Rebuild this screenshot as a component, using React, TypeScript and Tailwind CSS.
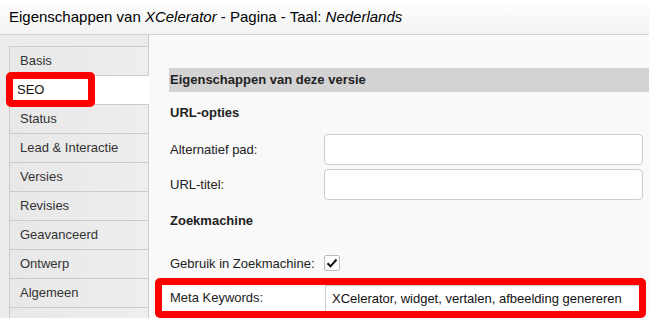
import React from "react";

const TABS = [
  "Basis",
  "SEO",
  "Status",
  "Lead & Interactie",
  "Versies",
  "Revisies",
  "Geavanceerd",
  "Ontwerp",
  "Algemeen",
  "",
];

function Tab({ label, active }: { label: string; active: boolean }) {
  if (active) {
    return (
      <div className="relative h-[29px] mr-[-1px] bg-white border-t border-l border-[#cccccc] flex items-center">
        {/* red highlight around selected tab */}
        <div className="absolute left-[-4px] top-[-4px] w-[89px] h-[35px] border-[7px] border-[#ff0000] rounded-[5px] bg-white flex items-center pl-[4px]">
          <span className="text-[13px] text-[#111]">{label}</span>
        </div>
      </div>
    );
  }
  return (
    <div className="h-[29px] border-t border-l border-[#cccccc] bg-gradient-to-r from-[#e8e8e8] to-[#eeeeee] flex items-center pl-[10px]">
      <span className="text-[13px] text-[#333]">{label}</span>
    </div>
  );
}

function FieldRow({ label, children }: { label: string; children: React.ReactNode }) {
  return (
    <div className="flex items-center">
      <div className="w-[155px] pl-[1px] text-[13px] text-[#222]">{label}</div>
      {children}
    </div>
  );
}

export default function App() {
  return (
    <div
      className="w-[649px] h-[318px] overflow-hidden bg-[#f9f9f9] flex flex-col"
      style={{ fontFamily: '"Liberation Sans", Arial, sans-serif' }}
    >
      {/* Title bar */}
      <div className="h-[35px] shrink-0 border-b border-[#d4d4d4] bg-gradient-to-b from-white to-[#f2f2f2] flex items-center pl-[9px] text-[15px] text-black">
        Eigenschappen van&nbsp;<i>XCelerator</i>&nbsp;- Pagina - Taal:&nbsp;<i>Nederlands</i>
      </div>

      <div className="flex flex-1 min-h-0">
        {/* Sidebar */}
        <div className="w-[149px] shrink-0 bg-[#ececec] border-r border-[#cccccc] pt-[11px] pl-[9px]">
          {TABS.map((t, i) => (
            <Tab key={i} label={t} active={t === "SEO"} />
          ))}
        </div>

        {/* Main */}
        <div className="flex-1 pl-[20px] pt-[33px] flex flex-col">
          <div className="h-[25px] bg-[#d3d3d3] flex items-center pl-[1px] text-[13px] font-bold text-[#222]">
            Eigenschappen van deze versie
          </div>

          <div className="h-[43px] flex items-center pl-[1px] text-[13px] font-bold text-[#222]">
            URL-opties
          </div>

          <div className="flex flex-col gap-[4px]">
            <FieldRow label="Alternatief pad:">
              <div className="w-[319px] h-[31px] bg-white border border-[#cccccc] rounded-[4px]" />
            </FieldRow>
            <FieldRow label="URL-titel:">
              <div className="w-[319px] h-[31px] bg-white border border-[#cccccc] rounded-[4px]" />
            </FieldRow>
          </div>

          <div className="h-[44px] flex items-center pl-[1px] text-[13px] font-bold text-[#222]">
            Zoekmachine
          </div>

          <div className="mt-[11px]">
            <FieldRow label="Gebruik in Zoekmachine:">
              <div className="w-[16px] h-[16px] bg-white border border-[#bbbbbb] rounded-[2px] flex items-center justify-center">
                <svg width="12" height="12" viewBox="0 0 12 12">
                  <path d="M1.5 6.2 L4.5 9.3 L10.5 2.5" fill="none" stroke="#111" strokeWidth="2" />
                </svg>
              </div>
            </FieldRow>
          </div>

          {/* Meta keywords, highlighted */}
          <div className="mt-[5px] ml-[-14px] w-[491px] h-[40px] shrink-0 border-[7px] border-[#ff0000] rounded-[5px] bg-white flex">
            <div className="w-[163px] flex items-center pl-[8px] text-[13px] text-[#222]">Meta Keywords:</div>
            <div className="flex-1 border-l border-t border-[#cccccc] flex items-center pl-[6px] text-[13px] text-[#111] whitespace-nowrap overflow-hidden">
              XCelerator, widget, vertalen, afbeelding genereren
            </div>
          </div>
        </div>
      </div>
    </div>
  );
}
